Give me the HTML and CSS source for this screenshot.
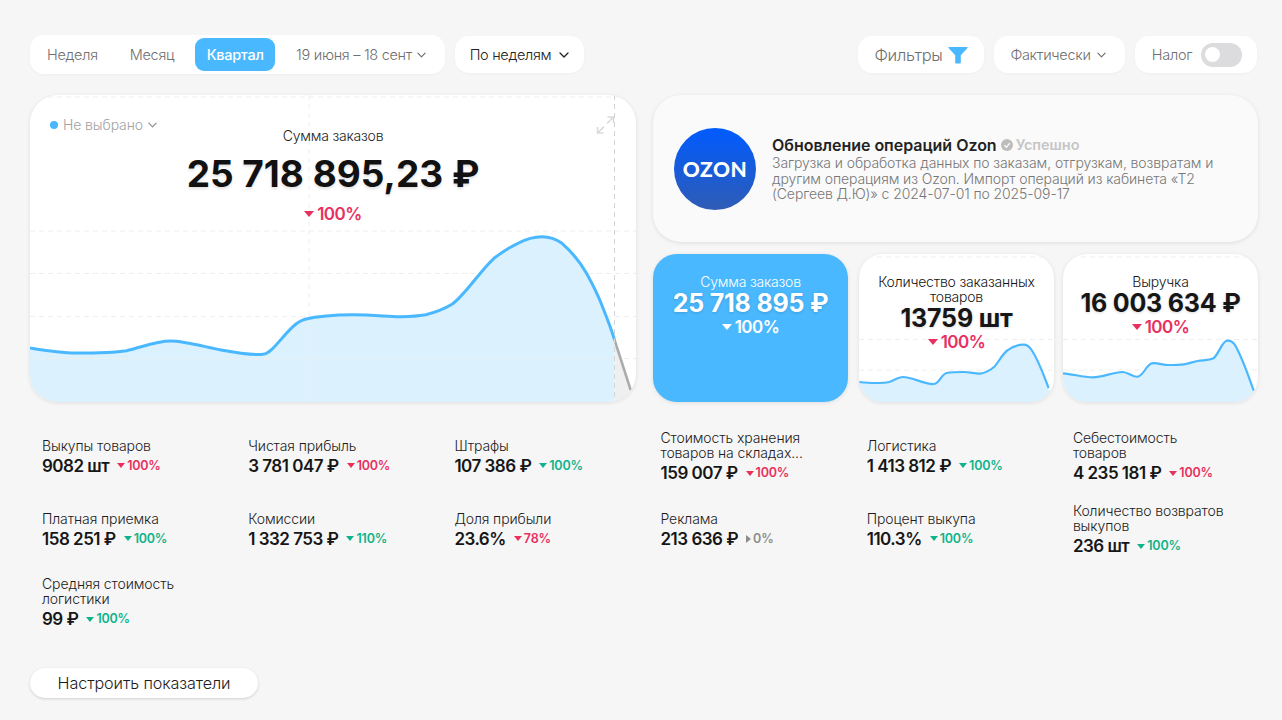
FILE: index.html
```html
<!DOCTYPE html>
<html lang="ru">
<head>
    <meta charset="UTF-8">
    <title>Сводка</title>
    <link rel="stylesheet" href="styles.css">
</head>
<body>

<svg class="sprite" width="0" height="0">
    <symbol id="chevron" viewBox="0 0 10 6"><path d="M1 1l4 4 4-4" fill="none" stroke="currentColor" stroke-width="1.3" stroke-linecap="round" stroke-linejoin="round"/></symbol>
</svg>

<div class="page">
    <!-- Top controls -->
    <div class="toolbar">
        <div class="toolbar-group">
            <div class="segments">
                <span class="segment seg-week">Неделя</span>
                <span class="segment seg-month">Месяц</span>
                <span class="segment seg-active">Квартал</span>
                <span class="segment seg-date">19 июня – 18 сент <svg class="chevron"><use href="#chevron"/></svg></span>
            </div>
            <div class="pill pill-dark">По неделям <svg class="chevron chevron-big"><use href="#chevron"/></svg></div>
        </div>
        <div class="toolbar-group">
            <div class="pill pill-filter">Фильтры
                <svg class="filter-icon" viewBox="0 0 20 18"><path d="M1 1h18c.6 0 .8.6.5 1l-6.7 7.2v7.3c0 .6-.4 1-1 1H8.200c-.6 0-1-.4-1-1V9.200L.5 2C.2 1.600.4 1 1 1z" fill="#4ab8fe"/></svg>
            </div>
            <div class="pill pill-fact">Фактически <svg class="chevron"><use href="#chevron"/></svg></div>
            <div class="pill pill-tax">Налог <span class="toggle"><span class="knob"></span></span></div>
        </div>
    </div>

    <div class="columns">
        <!-- Left column -->
        <div class="column">
            <div class="card chart-card">
                <svg class="chart" viewBox="0 0 606 307">
                    <g class="grid-lines">
                        <path d="M0 2H606M0 136H606M0 178.500H606M0 221.500H606M0 263.500H606M0 306H606M279 0V307"/>
                    </g>
                    <path d="M584.600 245L600.700 295L602 307H584.600Z" fill="#efefef"/>
                    <path d="M0 253C15 255.500 30 258 46 258S85 257.500 96.500 255.700C110 253 125 246 140.700 246C155 246 175 252 191 255C210 258.500 222 260.500 233 259.300C245 258 258 229 275 224.300C290 220.500 305 219.700 323.500 219.700C345 219.700 360 222 371.700 221.700C382 221.500 388 221 395.800 219.700C405 217.500 415 213.500 422 209.300C435 200 450 176 464 163.300C474 155.500 480 152 488 148.300C496 144 505 141.700 512 141.700C520 141.700 526 144 532 148.300C542 157 550 167 556.500 178.300C563 190 568 200 572.500 211.700C577 223 581 233 584.600 245V307H0Z" fill="#dbf1fd"/>
                    <path class="grid-lines" d="M0 263.500H585M279 222V307"/>
                    <path d="M584.600 245L600.700 295" fill="none" stroke="#a9abad" stroke-width="2.500"/>
                    <path d="M0 253C15 255.500 30 258 46 258S85 257.500 96.500 255.700C110 253 125 246 140.700 246C155 246 175 252 191 255C210 258.500 222 260.500 233 259.300C245 258 258 229 275 224.300C290 220.500 305 219.700 323.500 219.700C345 219.700 360 222 371.700 221.700C382 221.500 388 221 395.800 219.700C405 217.500 415 213.500 422 209.300C435 200 450 176 464 163.300C474 155.500 480 152 488 148.300C496 144 505 141.700 512 141.700C520 141.700 526 144 532 148.300C542 157 550 167 556.500 178.300C563 190 568 200 572.500 211.700C577 223 581 233 584.600 245" fill="none" stroke="#4ab8fe" stroke-width="3"/>
                    <path d="M584.500 0V307" stroke="#d2d5d8" stroke-dasharray="5 4" fill="none"/>
                </svg>
                <div class="chart-select"><span class="dot"></span>Не выбрано <svg class="chevron"><use href="#chevron"/></svg></div>
                <svg class="expand" viewBox="0 0 20 20"><path d="M12 2h6v6M18 2l-6.500 6.500M8 18H2v-6M2 18l6.500-6.500" fill="none" stroke="#dadada" stroke-width="1.600"/></svg>
                <div class="chart-head">
                    <div class="chart-title">Сумма заказов</div>
                    <div class="chart-value">25 718 895,23 ₽</div>
                    <div class="delta delta-big red"><i class="tri"></i>100%</div>
                </div>
            </div>

            <div class="metrics metrics-left">
                <div class="metric"><div class="metric-label">Выкупы товаров</div><div class="metric-row"><b>9082 шт</b><span class="delta red"><i class="tri"></i>100%</span></div></div>
                <div class="metric"><div class="metric-label">Чистая прибыль</div><div class="metric-row"><b>3 781 047 ₽</b><span class="delta red"><i class="tri"></i>100%</span></div></div>
                <div class="metric"><div class="metric-label">Штрафы</div><div class="metric-row"><b>107 386 ₽</b><span class="delta green"><i class="tri"></i>100%</span></div></div>
                <div class="metric"><div class="metric-label">Платная приемка</div><div class="metric-row"><b>158 251 ₽</b><span class="delta green"><i class="tri"></i>100%</span></div></div>
                <div class="metric"><div class="metric-label">Комиссии</div><div class="metric-row"><b>1 332 753 ₽</b><span class="delta green"><i class="tri"></i>110%</span></div></div>
                <div class="metric"><div class="metric-label">Доля прибыли</div><div class="metric-row"><b>23.6%</b><span class="delta red"><i class="tri"></i>78%</span></div></div>
                <div class="metric"><div class="metric-label">Средняя стоимость<br>логистики</div><div class="metric-row"><b>99 ₽</b><span class="delta green"><i class="tri"></i>100%</span></div></div>
            </div>

            <button class="setup">Настроить показатели</button>
        </div>

        <!-- Right column -->
        <div class="column">
            <div class="card ozon-card">
                <div class="ozon-logo">OZON</div>
                <div class="ozon-text">
                    <div class="ozon-title">Обновление операций Ozon
                        <span class="ozon-status">
                            <svg class="check" viewBox="0 0 12 12"><circle cx="6" cy="6" r="6" fill="#bdbdbd"/><path d="M3.300 6.200l2 2 3.500-4" fill="none" stroke="#fafafa" stroke-width="1.300"/></svg>Успешно
                        </span>
                    </div>
                    <div class="ozon-desc">Загрузка и обработка данных по заказам, отгрузкам, возвратам и<br>другим операциям из Ozon. Импорт операций из кабинета «Т2<br>(Сергеев Д.Ю)» с 2024-07-01 по 2025-09-17</div>
                </div>
            </div>

            <div class="tiles">
                <div class="card tile tile-active">
                    <div class="tile-label">Сумма заказов</div>
                    <div class="tile-value">25 718 895 ₽</div>
                    <div class="delta delta-big"><i class="tri"></i>100%</div>
                </div>
                <div class="card tile tile-mid">
                    <svg class="chart" viewBox="0 0 195 148">
                        <path class="grid-lines" d="M0 3H195M0 85.500H195M0 116H195"/>
                        <path d="M0 128C5 128.500 11 129 16 129C22 129 26 129 30 128C35 126.500 39 123 44 123C54 123 66 131 75 130C81 129 82 120.500 87.600 119C93 118 99 118 105 118C111 118 116 120 121 119.700C126 119 131 116.500 135 113C140 108 143 100 149 96C154 92 160 90.700 164.700 90.700C168 90.700 170 92 172.600 96C180 107 185 122 189.600 134L195 148H0Z" fill="#dbf1fd"/>
                        <path d="M0 128C5 128.500 11 129 16 129C22 129 26 129 30 128C35 126.500 39 123 44 123C54 123 66 131 75 130C81 129 82 120.500 87.600 119C93 118 99 118 105 118C111 118 116 120 121 119.700C126 119 131 116.500 135 113C140 108 143 100 149 96C154 92 160 90.700 164.700 90.700C168 90.700 170 92 172.600 96C180 107 185 122 189.600 134" fill="none" stroke="#4ab8fe" stroke-width="2.200"/>
                    </svg>
                    <div class="tile-body">
                        <div class="tile-label">Количество заказанных<br>товаров</div>
                        <div class="tile-value">13759 шт</div>
                        <div class="delta delta-big red"><i class="tri"></i>100%</div>
                    </div>
                </div>
                <div class="card tile">
                    <svg class="chart" viewBox="0 0 195 148">
                        <path class="grid-lines" d="M0 3H195M0 85.500H195M0 116H195"/>
                        <path d="M0 119.300C10 120 20 123.300 30 123.300C40 123.300 50 118 59.500 118C65 118 70 123.500 75 122.700C81 121 83 111 89 109.300C94 108.500 100 111 105 111C111 111 116 111 121 110.300C126 109.500 130 108 134.700 107C140 106 146 106.500 150.500 104.300C156 100 159 87 164.300 86.700C168 86.500 170 88 172 91C180 105 186 124 190.800 136.700L195 148H0Z" fill="#dbf1fd"/>
                        <path d="M0 119.300C10 120 20 123.300 30 123.300C40 123.300 50 118 59.500 118C65 118 70 123.500 75 122.700C81 121 83 111 89 109.300C94 108.500 100 111 105 111C111 111 116 111 121 110.300C126 109.500 130 108 134.700 107C140 106 146 106.500 150.500 104.300C156 100 159 87 164.300 86.700C168 86.500 170 88 172 91C180 105 186 124 190.800 136.700" fill="none" stroke="#4ab8fe" stroke-width="2.200"/>
                    </svg>
                    <div class="tile-body">
                        <div class="tile-label">Выручка</div>
                        <div class="tile-value">16 003 634 ₽</div>
                        <div class="delta delta-big red"><i class="tri"></i>100%</div>
                    </div>
                </div>
            </div>

            <div class="metrics metrics-right">
                <div class="metric"><div class="metric-label">Стоимость хранения<br>товаров на складах...</div><div class="metric-row"><b>159 007 ₽</b><span class="delta red"><i class="tri"></i>100%</span></div></div>
                <div class="metric"><div class="metric-label">Логистика</div><div class="metric-row"><b>1 413 812 ₽</b><span class="delta green"><i class="tri"></i>100%</span></div></div>
                <div class="metric"><div class="metric-label">Себестоимость<br>товаров</div><div class="metric-row"><b>4 235 181 ₽</b><span class="delta red"><i class="tri"></i>100%</span></div></div>
                <div class="metric"><div class="metric-label">Реклама</div><div class="metric-row"><b>213 636 ₽</b><span class="delta gray"><i class="tri tri-right"></i>0%</span></div></div>
                <div class="metric"><div class="metric-label">Процент выкупа</div><div class="metric-row"><b>110.3%</b><span class="delta green"><i class="tri"></i>100%</span></div></div>
                <div class="metric"><div class="metric-label">Количество возвратов<br>выкупов</div><div class="metric-row"><b>236 шт</b><span class="delta green"><i class="tri"></i>100%</span></div></div>
            </div>
        </div>
    </div>
</div>

</body>
</html>
```

FILE: styles.css
```css
body {
    margin: 0;
    background-color: #f6f6f6;
    font-family: Inter, "Noto Sans", sans-serif;
    color: #161616;
    overflow: hidden;
}
.sprite {
    position: absolute;
}
.page {
    width: 1228px;
    height: 720px;
    padding: 35px 24px 0 30px;
}

/* toolbar */
.toolbar {
    display: flex;
    justify-content: space-between;
    align-items: flex-start;
    height: 40px;
    margin-right: 1px;
}
.toolbar-group {
    display: flex;
    align-items: flex-start;
    gap: 10px;
}
.segments {
    display: flex;
    align-items: center;
    width: 415px;
    height: 39px;
    background-color: #fff;
    border-radius: 14px;
    box-shadow: 0 1px 3px rgba(0, 0, 0, 0.03);
    font-size: 14.5px;
    font-weight: 300;
    letter-spacing: -0.3px;
    color: #6f6f6f;
}
.segment {
    display: flex;
    align-items: center;
    gap: 5px;
}
.seg-week {
    margin-left: 17px;
}
.seg-month {
    margin-left: 32px;
}
.seg-active {
    margin-left: 21px;
    width: 80px;
    height: 33px;
    justify-content: center;
    background-color: #4ab8fe;
    border-radius: 9px;
    color: #fff;
    font-weight: 500;
}
.seg-date {
    margin-left: 21px;
}
.chevron {
    width: 9px;
    height: 6px;
}
.chevron-big {
    width: 10px;
    margin-left: 2px;
}
.pill {
    display: flex;
    align-items: center;
    justify-content: center;
    gap: 5px;
    height: 37px;
    margin-top: 1px;
    box-sizing: border-box;
    background-color: #fff;
    border-radius: 14px;
    box-shadow: 0 1px 3px rgba(0, 0, 0, 0.03);
    font-size: 14.5px;
    font-weight: 300;
    letter-spacing: -0.3px;
    color: #6f6f6f;
}
.pill-dark {
    width: 129px;
    gap: 6px;
    color: #222;
}
.pill-filter {
    width: 126px;
    font-size: 16.5px;
}
.filter-icon {
    width: 20px;
    height: 18px;
}
.pill-fact {
    width: 131px;
    gap: 6px;
    padding-right: 3px;
}
.pill-tax {
    width: 122px;
    gap: 9px;
    padding-left: 2px;
}
.toggle {
    display: flex;
    align-items: center;
    width: 41px;
    height: 24px;
    padding-left: 4px;
    box-sizing: border-box;
    background-color: #dcdcdf;
    border-radius: 12px;
}
.knob {
    width: 15px;
    height: 15px;
    background-color: #fff;
    border-radius: 50%;
}

/* columns */
.columns {
    display: grid;
    grid-template-columns: 606px 605px;
    gap: 17px;
    margin-top: 20px;
}
.card {
    position: relative;
    overflow: hidden;
    background-color: #fff;
    box-shadow: 0 1px 4px rgba(0, 0, 0, 0.1);
}
.chart {
    position: absolute;
    top: 0;
    left: 0;
    width: 100%;
    height: 100%;
}
.grid-lines,
.grid-lines path {
    fill: none;
    stroke: #eeeeef;
    stroke-width: 1;
    stroke-dasharray: 5 4;
}

/* main chart */
.chart-card {
    height: 307px;
    border-radius: 28px;
}
.chart-select {
    position: absolute;
    top: 21px;
    left: 20px;
    display: flex;
    align-items: center;
    gap: 5px;
    font-size: 14px;
    font-weight: 300;
    letter-spacing: -0.1px;
    color: #a3a3a3;
}
.chart-select .chevron {
    color: #8c8c8c;
}
.dot {
    width: 8px;
    height: 8px;
    background-color: #4ab8fe;
    border-radius: 50%;
}
.expand {
    position: absolute;
    top: 20px;
    left: 565px;
    width: 21px;
    height: 20px;
}
.chart-head {
    position: relative;
    padding-top: 33px;
    text-align: center;
}
.chart-title {
    font-size: 14px;
    line-height: 16px;
    font-weight: 300;
    letter-spacing: -0.2px;
    color: #222;
}
.chart-value {
    margin-top: 7px;
    font-size: 37px;
    line-height: 46px;
    font-weight: 700;
    letter-spacing: 0;
    color: #111;
    text-shadow: 0 2px 3px rgba(0, 0, 0, 0.12);
}

/* change markers */
.delta {
    display: inline-flex;
    align-items: center;
    gap: 2px;
    font-size: 12.5px;
    font-weight: 600;
    letter-spacing: -0.2px;
}
.delta-big {
    display: flex;
    justify-content: center;
    margin-top: 7px;
    height: 20px;
    gap: 3px;
    font-size: 17px;
    letter-spacing: -0.5px;
}
.tri {
    width: 0;
    height: 0;
    border-left: 4px solid transparent;
    border-right: 4px solid transparent;
    border-top: 5px solid currentColor;
}
.delta-big .tri {
    border-left-width: 5.5px;
    border-right-width: 5.5px;
    border-top-width: 6px;
}
.tri-right {
    border-top: 4px solid transparent;
    border-bottom: 4px solid transparent;
    border-left: 5px solid currentColor;
    border-right: 0;
}
.red { color: #e8305f; }
.green { color: #0fb38a; }
.gray { color: #8d8d8d; }

/* ozon card */
.ozon-card {
    display: flex;
    align-items: center;
    gap: 16px;
    height: 147px;
    padding-left: 21px;
    background-color: #fafafa;
    border-radius: 28px;
}
.ozon-logo {
    display: flex;
    align-items: center;
    justify-content: center;
    flex: none;
    width: 82px;
    height: 82px;
    background: linear-gradient(180deg, #005bff, #2f5cb5);
    border-radius: 50%;
    color: #fff;
    font-family: Lato, sans-serif;
    font-size: 21px;
    font-weight: 900;
    letter-spacing: 0.5px;
}
.ozon-title {
    display: flex;
    align-items: center;
    gap: 4px;
    font-size: 16px;
    line-height: 20px;
    font-weight: 600;
    letter-spacing: -0.03px;
    color: #222;
}
.ozon-status {
    display: flex;
    align-items: center;
    gap: 3px;
    font-size: 14.500px;
    color: #c6c6c6;
}
.check {
    width: 12px;
    height: 12px;
}
.ozon-desc {
    font-size: 14px;
    line-height: 15.500px;
    font-weight: 300;
    letter-spacing: -0.1px;
    color: #777;
    white-space: nowrap;
}

/* tiles */
.tiles {
    display: flex;
    justify-content: space-between;
    margin-top: 12px;
}
.tile {
    width: 195px;
    height: 148px;
    border-radius: 24px;
    text-align: center;
}
.tile-mid {
    margin-left: 2px;
}
.tile-active {
    padding-top: 19.500px;
    box-sizing: border-box;
    background-color: #4ab8fe;
    color: #fff;
}
.tile-body {
    position: relative;
    padding-top: 19.500px;
}
.tile-label {
    font-size: 14px;
    line-height: 15px;
    font-weight: 300;
    letter-spacing: -0.2px;
}
.tile-value {
    font-size: 25px;
    line-height: 28px;
    font-weight: 700;
    letter-spacing: -0.2px;
    text-shadow: 0 1px 3px rgba(0, 0, 0, 0.15);
}
.tile .delta-big {
    margin-top: 0;
}

/* metrics */
.metrics {
    display: grid;
    grid-template-columns: repeat(3, 206.200px);
    grid-auto-rows: 73px;
    align-items: center;
    margin-top: 18.500px;
}
.metrics-left {
    padding-left: 12px;
}
.metrics-right {
    padding-left: 7.500px;
}
.metric-label {
    font-size: 14px;
    line-height: 15px;
    font-weight: 300;
    letter-spacing: -0.1px;
    color: #1c1c1c;
}
.metric-row {
    display: flex;
    align-items: center;
    gap: 8px;
    margin-top: 2px;
    line-height: 22px;
}
.metric-row b {
    font-size: 17px;
    font-weight: 600;
    letter-spacing: -0.5px;
    color: #161616;
}

.setup {
    display: block;
    width: 228px;
    height: 30px;
    margin-top: 28px;
    padding: 0;
    background-color: #fff;
    border: 0;
    border-radius: 15px;
    box-shadow: 0 1px 3px rgba(0, 0, 0, 0.16);
    font-family: Inter, sans-serif;
    font-size: 16.200px;
    font-weight: 300;
    letter-spacing: -0.1px;
    color: #1c1c1c;
}
```
